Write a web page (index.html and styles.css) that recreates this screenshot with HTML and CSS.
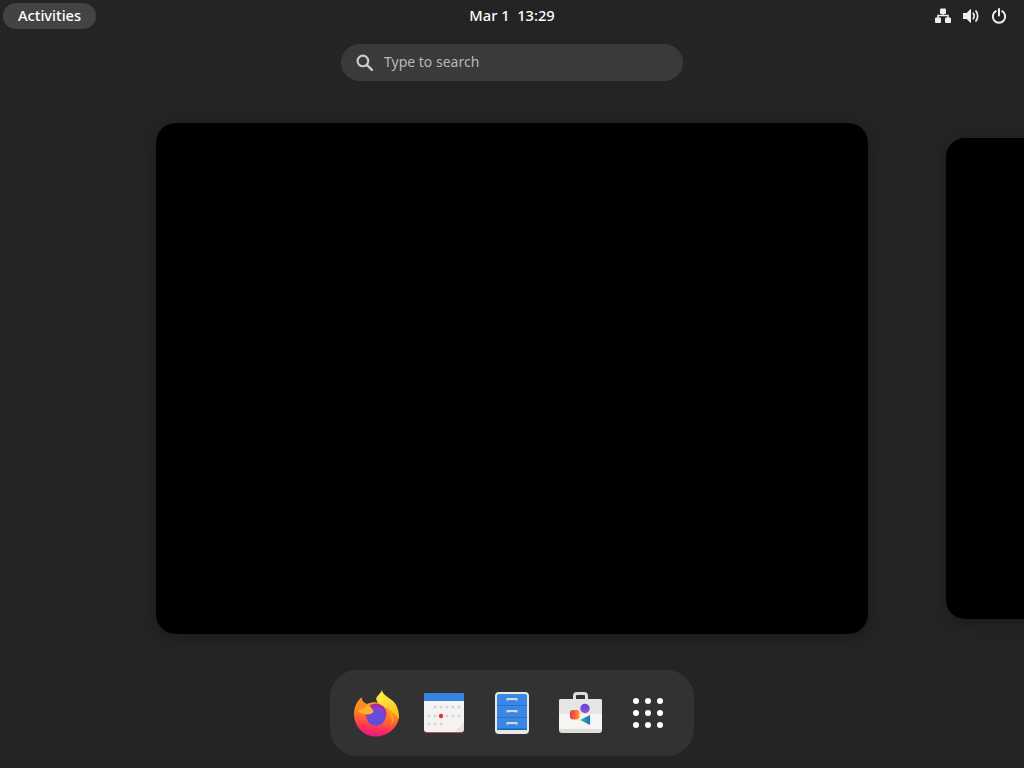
FILE: index.html
```html
<!DOCTYPE html>
<html lang="en">
<head>
    <meta charset="UTF-8">
    <title>Activities Overview</title>
    <link rel="stylesheet" href="styles.css">
</head>
<body>
    <div class="desktop">
        <!-- Top bar -->
        <header class="topbar">
            <div class="topbar-left">
                <span class="activities">Activities</span>
            </div>
            <div class="clock">Mar 1&nbsp; 13:29</div>
            <div class="status">
                <svg class="status-icon" viewBox="0 0 16 16">
                    <rect x="5" y="0.500" width="6" height="5.500" rx="1" fill="#eee"/>
                    <rect x="0" y="9.500" width="6" height="5.500" rx="1" fill="#eee"/>
                    <rect x="10" y="9.500" width="6" height="5.500" rx="1" fill="#eee"/>
                    <path d="M8 5v3M3 11V7.500h10V11" fill="none" stroke="#eee" stroke-width="1.500"/>
                </svg>
                <svg class="status-icon" viewBox="0 0 16 16">
                    <path d="M0 5h3.500L8 .8v14.400L3.500 11H0z" fill="#eee"/>
                    <path d="M10.300 5.300c1 1.700 1 3.700 0 5.400M13 3c2 3 2 7 0 10" fill="none" stroke="#eee" stroke-width="1.700" stroke-linecap="round"/>
                </svg>
                <svg class="status-icon" viewBox="0 0 16 16">
                    <path d="M4.800 3.200a6.200 6.200 0 1 0 6.400 0" fill="none" stroke="#eee" stroke-width="2" stroke-linecap="round"/>
                    <path d="M8 1v6.500" fill="none" stroke="#eee" stroke-width="2" stroke-linecap="round"/>
                </svg>
            </div>
        </header>

        <!-- Search -->
        <div class="search-row">
            <div class="search">
                <svg class="search-icon" viewBox="0 0 16 16">
                    <circle cx="6.500" cy="6.500" r="5" fill="none" stroke="#ccc" stroke-width="2"/>
                    <path d="M10.200 10.200L15 15" fill="none" stroke="#ccc" stroke-width="2.200" stroke-linecap="round"/>
                </svg>
                <span class="search-text">Type to search</span>
            </div>
        </div>

        <!-- Workspaces -->
        <main class="workspaces">
            <div class="workspace workspace-active"></div>
            <div class="workspace workspace-next"></div>
        </main>

        <!-- Dash -->
        <div class="dash-row">
            <nav class="dash">
                <div class="dash-item">
                    <svg class="firefox" viewBox="0 0 50 50" width="50" height="50">
                        <defs>
                            <linearGradient id="ffBody" x1="0.6" y1="0" x2="0.4" y2="1">
                                <stop offset="0" stop-color="#ffb51f"/>
                                <stop offset="0.45" stop-color="#ff7f22"/>
                                <stop offset="0.8" stop-color="#ff2f55"/>
                                <stop offset="1" stop-color="#e2178a"/>
                            </linearGradient>
                            <linearGradient id="ffFlame" x1="0.3" y1="0" x2="0.8" y2="1">
                                <stop offset="0" stop-color="#fff04a"/>
                                <stop offset="1" stop-color="#ffb81f"/>
                            </linearGradient>
                            <linearGradient id="ffGlobe" x1="0.5" y1="0" x2="0.5" y2="1">
                                <stop offset="0" stop-color="#7a48d8"/>
                                <stop offset="1" stop-color="#5b4fd6"/>
                            </linearGradient>
                        </defs>
                        <path d="M10.500 9.500C11 13 13 15 16 16C20 14 26 14 31 15C38 17 44 19 48 27C48 39 37 48.500 25 48.500C12 48.500 3 38 3 26C3 19 6 13 10.500 9.500Z" fill="url(#ffBody)"/>
                        <circle cx="25" cy="26" r="10.500" fill="#b02a9a"/>
                        <path d="M31 2C31 6 37 9 42 13C46 17 48 22 48 31C45 27 41 23 36 20C30 17 24 14 25.500 9.500C27 7 30 5 31 2Z" fill="url(#ffFlame)"/>
                        <path d="M38 21C43 26 44 32 40 38C42 31 40 26 36 22Z" fill="#ffa51f"/>
                        <circle cx="25" cy="28.500" r="9.500" fill="url(#ffGlobe)"/>
                        <path d="M7 23C11 21 14 19 17 17C20 19 22 21 22.500 24C20 26.500 16 27 13 26C11 25.500 9 24.500 7 23Z" fill="#ffb02e"/>
                        <path d="M10.500 9.500C11 13 12 16 17 17C14 19 11 21 7 22C6 18 8 13 10.500 9.500Z" fill="#ff8a1f"/>
                    </svg>
                </div>
                <div class="dash-item">
                    <svg viewBox="0 0 40 40" width="40" height="40">
                        <rect x="0" y="1" width="40" height="39" rx="3" fill="#b5545e"/>
                        <rect x="0" y="0" width="40" height="39" rx="3" fill="#f4f3f1"/>
                        <path d="M0 8V3a3 3 0 0 1 3-3h34a3 3 0 0 1 3 3v5z" fill="#3584e4"/>
                        <g fill="#d6d5d3">
                            <circle cx="11" cy="14" r="1.500"/><circle cx="17" cy="14" r="1.500"/><circle cx="23" cy="14" r="1.500"/><circle cx="29" cy="14" r="1.500"/><circle cx="35" cy="14" r="1.500"/>
                            <circle cx="5" cy="23" r="1.500"/><circle cx="11" cy="23" r="1.500"/><circle cx="23" cy="23" r="1.500"/><circle cx="29" cy="23" r="1.500"/><circle cx="35" cy="23" r="1.500"/>
                            <circle cx="5" cy="31" r="1.500"/><circle cx="11" cy="31" r="1.500"/><circle cx="17" cy="31" r="1.500"/>
                        </g>
                        <circle cx="17" cy="23" r="2.200" fill="#e8303a"/>
                        <path d="M40 29.500L31 38.500H37a3 3 0 0 0 3-3z" fill="#e4e3e0"/>
                    </svg>
                </div>
                <div class="dash-item">
                    <svg viewBox="0 0 34 42" width="34" height="42">
                        <rect x="0" y="0" width="34" height="42" rx="4" fill="#e9e8e5"/>
                        <path d="M2 4a2 2 0 0 1 2-2h26a2 2 0 0 1 2 2v34H2z" fill="#3a88e6"/>
                        <path d="M2 13.500h30M2 25.500h30" stroke="#2a6fc4" stroke-width="1"/>
                        <rect x="2" y="36.500" width="30" height="1.500" fill="#1c62b8"/>
                        <g fill="none" stroke="#d8d8d4" stroke-width="2">
                            <path d="M12.500 8.500V7h9v1.500"/>
                            <path d="M12.500 20.500V19h9v1.500"/>
                            <path d="M12.500 32.500V31h9v1.500"/>
                        </g>
                    </svg>
                </div>
                <div class="dash-item">
                    <svg viewBox="0 0 43 42" width="43" height="42">
                        <defs>
                            <linearGradient id="bagRed" x1="0" y1="0" x2="1" y2="0">
                                <stop offset="0" stop-color="#f0304f"/>
                                <stop offset="1" stop-color="#ff9a2a"/>
                            </linearGradient>
                            <linearGradient id="bagPurple" x1="0.5" y1="0" x2="0.5" y2="1">
                                <stop offset="0" stop-color="#5a45d8"/>
                                <stop offset="1" stop-color="#a04ed0"/>
                            </linearGradient>
                            <linearGradient id="bagTeal" x1="0" y1="0" x2="1" y2="0">
                                <stop offset="0" stop-color="#2ec27e"/>
                                <stop offset="1" stop-color="#1c71d8"/>
                            </linearGradient>
                        </defs>
                        <path d="M15.500 9V4a2.500 2.500 0 0 1 2.500-2.500h7a2.500 2.500 0 0 1 2.500 2.500v5" fill="none" stroke="#deddda" stroke-width="3"/>
                        <path d="M2 7H41a2 2 0 0 1 2 2V38a3 3 0 0 1-3 3H3a3 3 0 0 1-3-3V9a2 2 0 0 1 2-2z" fill="#deddda"/>
                        <path d="M0 9a2 2 0 0 1 2-2H41a2 2 0 0 1 2 2V22H0z" fill="#e6e5e2"/>
                        <rect x="0" y="22" width="43" height="15" fill="#f6f5f4"/>
                        <circle cx="26" cy="16.500" r="4.700" fill="url(#bagPurple)"/>
                        <rect x="11" y="18" width="9.500" height="9.500" rx="3" fill="url(#bagRed)"/>
                        <path d="M31 23V33L21 28Z" fill="url(#bagTeal)"/>
                    </svg>
                </div>
                <div class="dash-item">
                    <div class="app-grid">
                        <span class="dot"></span><span class="dot"></span><span class="dot"></span>
                        <span class="dot"></span><span class="dot"></span><span class="dot"></span>
                        <span class="dot"></span><span class="dot"></span><span class="dot"></span>
                    </div>
                </div>
            </nav>
        </div>
    </div>
</body>
</html>
```

FILE: styles.css
```css
/* Resetting some default browser styles */
html, body {
    margin: 0;
    padding: 0;
    height: 100%;
}

body {
    font-family: "Noto Sans", sans-serif;
    background-color: #242424;
    color: #fff;
    overflow: hidden;
}

.desktop {
    display: flex;
    flex-direction: column;
    width: 1024px;
    height: 768px;
    overflow: hidden;
}

/* Top bar */
.topbar {
    display: grid;
    grid-template-columns: 1fr auto 1fr;
    align-items: center;
    height: 32px;
    padding: 0 3px 1px;
    box-sizing: border-box;
    flex-shrink: 0;
}

.activities {
    display: inline-block;
    padding: 0 15px;
    height: 26px;
    line-height: 25px;
    border-radius: 13px;
    background-color: #434343;
    font-size: 14.67px;
    font-weight: 500;
}

.clock {
    padding-bottom: 2px;
    font-size: 14.67px;
    font-weight: 500;
}

.status {
    display: flex;
    justify-content: flex-end;
    gap: 12px;
    padding-right: 14px;
}

.status-icon {
    width: 16px;
    height: 16px;
}

/* Search */
.search-row {
    display: flex;
    justify-content: center;
    margin-top: 12px;
    flex-shrink: 0;
}

.search {
    display: flex;
    align-items: center;
    width: 342px;
    height: 37px;
    padding-left: 15px;
    box-sizing: border-box;
    border-radius: 19px;
    background-color: #3a3a3a;
}

.search-icon {
    width: 17px;
    height: 17px;
    margin-right: 11px;
}

.search-text {
    padding-bottom: 2px;
    font-size: 14px;
    color: #b8b8b8;
}

/* Workspaces */
.workspaces {
    display: flex;
    align-items: center;
    gap: 78px;
    margin-top: 42px;
    padding-left: 156px;
    flex-shrink: 0;
}

.workspace {
    flex-shrink: 0;
    background-color: #000;
    box-shadow: 0 4px 16px rgba(0, 0, 0, 0.25);
}

.workspace-active {
    width: 712px;
    height: 511px;
    border-radius: 20px;
}

.workspace-next {
    width: 660px;
    height: 481px;
    border-radius: 19px;
}

/* Dash */
.dash-row {
    display: flex;
    justify-content: center;
    margin-top: 36px;
}

.dash {
    display: flex;
    padding: 0 12px;
    height: 86px;
    border-radius: 27px;
    background-color: #323232;
}

.dash-item {
    display: flex;
    align-items: center;
    justify-content: center;
    width: 68px;
}

.app-grid {
    display: grid;
    grid-template-columns: repeat(3, 6px);
    gap: 6px;
}

.dot {
    width: 6px;
    height: 6px;
    border-radius: 50%;
    background-color: #fff;
}
```
